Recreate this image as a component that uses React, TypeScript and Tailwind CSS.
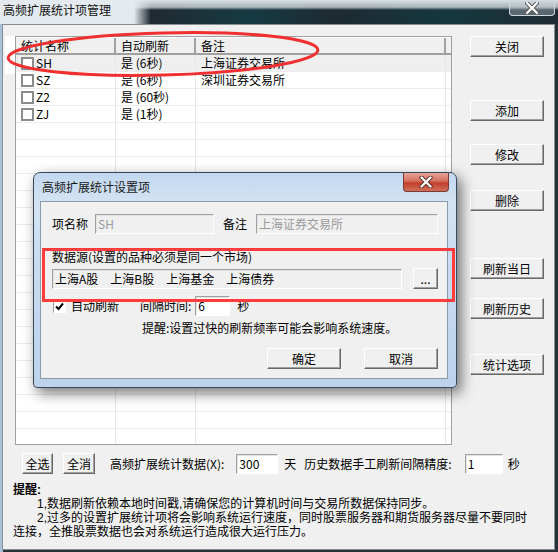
import React from "react";

const rows = [
  { name: "SH", auto: "是 (6秒)", note: "上海证券交易所", sel: true },
  { name: "SZ", auto: "是 (6秒)", note: "深圳证券交易所" },
  { name: "Z2", auto: "是 (60秒)", note: "" },
  { name: "ZJ", auto: "是 (1秒)", note: "" },
];

function Btn({ label, className = "" }: { label: string; className?: string }) {
  return (
    <div
      className={`flex items-center justify-center h-[21px] bg-[#f0f0f0] border border-t-white border-l-white border-b-[#696969] border-r-[#696969] shadow-[inset_-1px_-1px_0_#a0a0a0] text-[12px] ${className}`}
    >
      {label}
    </div>
  );
}

function Field({ value, className = "", disabled = false, gray = false }: { value: string; className?: string; disabled?: boolean; gray?: boolean }) {
  return (
    <div
      className={`flex items-center h-[20px] px-[2px] border border-t-[#a0a0a0] border-l-[#a0a0a0] border-b-white border-r-white shadow-[inset_1px_1px_0_#e3e3e3] ${
        gray ? "bg-[#f0f0f0]" : "bg-white"
      } ${disabled ? "text-[#9a9a9a]" : "text-black"} ${className}`}
    >
      {value}
    </div>
  );
}

function Box() {
  return <div className="w-[13px] h-[13px] border-2 border-[#8c8c8c] bg-white shrink-0" />;
}

export default function App() {
  const filler = Array.from({ length: 19 });
  return (
    <div className="relative w-[558px] h-[552px] overflow-hidden bg-[linear-gradient(to_right,#a8c2dc_0,#a8c2dc_3px,#26323a_3px,#26323a_100%)] font-['Noto_Sans_CJK_SC',sans-serif] text-[12px] leading-[14px] text-black">
      {/* title bar */}
      <div className="h-[24px] flex items-start justify-between bg-[linear-gradient(to_bottom,rgba(228,234,238,0.95)_0,rgba(228,234,238,0.7)_30%,rgba(228,234,238,0)_42%),linear-gradient(to_right,#e3eaef_0,#e3eaef_24%,#1f2a30_27%,#163a44_45%,#1d2a31_60%,#15373f_80%,#1f2c33_100%)]">
        <div className="pl-[3px] pt-[3px] text-[12px] leading-[14px] text-[#111]">高频扩展统计项管理</div>
        <div className="mr-[3px] w-[46px] h-[16px] rounded-b-[4px] border border-t-0 border-[#d0d8de] bg-[rgba(200,210,218,0.35)] flex items-center justify-center">
          <svg width="14" height="12" viewBox="0 0 14 12">
            <path d="M2 1 L12 11 M12 1 L2 11" stroke="#555" strokeWidth="4" strokeLinecap="round" />
            <path d="M2 1 L12 11 M12 1 L2 11" stroke="#fff" strokeWidth="2.2" strokeLinecap="round" />
          </svg>
        </div>
      </div>

      {/* window body */}
      <div className="ml-[2px] w-[553px] h-[526px] border border-[#8a8f94] bg-[#f0f0f0]">
        <div className="flex pl-[12px] pt-[11px]">
          {/* list */}
          <div className="w-[437px] h-[409px] border border-[#a0a0a0] bg-white overflow-hidden">
            <div className="flex h-[18px] bg-[#f0f0f0] border-b-2 border-b-[#a0a0a0] border-t border-t-white">
              <div className="w-[100px] pl-[5px] border-r-2 border-r-[#a0a0a0] flex items-center">统计名称</div>
              <div className="w-[80px] pl-[5px] border-r-2 border-r-[#a0a0a0] flex items-center">自动刷新</div>
              <div className="w-[250px] pl-[5px] border-r-2 border-r-[#a0a0a0] flex items-center">备注</div>
              <div className="flex-1" />
            </div>
            {rows.map((r) => (
              <div key={r.name} className={`flex h-[17px] border-b border-b-[#ececec] ${r.sel ? "bg-[#efefef]" : ""}`}>
                <div className="w-[100px] pl-[5px] border-r border-r-[#e6e6e6] flex items-center gap-[2px]">
                  <Box />
                  <span>{r.name}</span>
                </div>
                <div className="w-[80px] pl-[5px] border-r border-r-[#e6e6e6] flex items-center">{r.auto}</div>
                <div className="w-[250px] pl-[5px] border-r border-r-[#e6e6e6] flex items-center">{r.note}</div>
                <div className="flex-1" />
              </div>
            ))}
            {filler.map((_, i) => (
              <div key={i} className="flex h-[17px] border-b border-b-[#ececec]">
                <div className="w-[100px] border-r border-r-[#e6e6e6]" />
                <div className="w-[80px] border-r border-r-[#e6e6e6]" />
                <div className="w-[250px] border-r border-r-[#e6e6e6]" />
              </div>
            ))}
          </div>

          {/* right buttons */}
          <div className="ml-[18px] flex flex-col">
            <Btn label="关闭" className="w-[74px]" />
            <Btn label="添加" className="w-[74px] mt-[43px]" />
            <Btn label="修改" className="w-[74px] mt-[23px]" />
            <Btn label="删除" className="w-[74px] mt-[25px]" />
            <Btn label="刷新当日" className="w-[74px] mt-[47px]" />
            <Btn label="刷新历史" className="w-[74px] mt-[19px]" />
            <Btn label="统计选项" className="w-[74px] mt-[35px]" />
          </div>
        </div>

        {/* bottom options row */}
        <div className="flex items-center h-[21px] mt-[8px] pl-[19px]">
          <Btn label="全选" className="w-[31px]" />
          <Btn label="全消" className="w-[32px] ml-[10px]" />
          <span className="ml-[15px]">高频扩展统计数据(X):</span>
          <Field value="300" className="w-[42px] ml-[12px]" />
          <span className="ml-[6px]">天</span>
          <span className="ml-[8px]">历史数据手工刷新间隔精度:</span>
          <Field value="1" className="w-[38px] ml-[13px]" />
          <span className="ml-[5px]">秒</span>
        </div>

        {/* reminder */}
        <div className="mt-[9px] pl-[10px] pr-[10px] font-['Liberation_Sans','Noto_Sans_CJK_SC',sans-serif] leading-[14px]">
          <div className="font-bold">提醒:</div>
          <div className="pl-[24px]">1,数据刷新依赖本地时间戳,请确保您的计算机时间与交易所数据保持同步。</div>
          <div className="pl-[24px] whitespace-nowrap">2,过多的设置扩展统计项将会影响系统运行速度，同时股票服务器和期货服务器尽量不要同时</div>
          <div>连接，全推股票数据也会对系统运行造成很大运行压力。</div>
        </div>
      </div>

      {/* annotation highlight + ellipse */}
      <div className="absolute left-[5px] top-[36px] w-[10px] h-[38px] bg-white" />
      <svg className="absolute left-0 top-0 pointer-events-none" width="558" height="552">
        <ellipse cx="163" cy="54" rx="155" ry="21" fill="none" stroke="#f03030" strokeWidth="3" transform="rotate(-1.5 163 54)" />
      </svg>

      {/* dialog */}
      <div className="absolute left-[33px] top-[172px] w-[424px] h-[216px] rounded-t-[7px] rounded-b-[4px] border border-[#37475a] bg-[linear-gradient(to_bottom,#c2d8ef_0,#d3e3f3_14%,#c9dcf0_40%,#bcd3ec_100%)] shadow-[4px_5px_14px_rgba(0,0,0,0.55)]">
        <div className="flex justify-between h-[28px]">
          <div className="pl-[8px] pt-[7px] text-[#1a1a1a]">高频扩展统计设置项</div>
          <div className="mr-[7px] w-[46px] h-[19px] rounded-b-[4px] border border-t-0 border-[#7a3a33] bg-[linear-gradient(to_bottom,#e7a497_0,#d4705f_45%,#c23f2c_55%,#d1705a_100%)] flex items-center justify-center">
            <svg width="14" height="12" viewBox="0 0 14 12">
              <path d="M2.5 1.5 L11.5 10.5 M11.5 1.5 L2.5 10.5" stroke="#5a2a25" strokeWidth="4.2" strokeLinecap="round" />
              <path d="M2.5 1.5 L11.5 10.5 M11.5 1.5 L2.5 10.5" stroke="#fff" strokeWidth="2.4" strokeLinecap="round" />
            </svg>
          </div>
        </div>
        <div className="ml-[6px] w-[408px] h-[178px] border border-[#8a9aab] bg-[#f0f0f0]">
          <div className="flex items-center h-[20px] mt-[12px] pl-[11px]">
            <span>项名称</span>
            <Field value="SH" disabled gray className="w-[119px] ml-[7px]" />
            <span className="ml-[9px]">备注</span>
            <Field value="上海证券交易所" disabled gray className="w-[182px] ml-[9px]" />
          </div>
          <div className="mt-[16px] pl-[11px]">数据源(设置的品种必须是同一个市场)</div>
          <div className="flex items-center mt-[4px] pl-[11px]">
            <Field value="上海A股　上海B股　上海基金　上海债券" gray className="w-[350px]" />
            <Btn label="..." className="w-[25px] ml-[11px]" />
          </div>
          <div className="flex items-center h-[20px] mt-[7px] pl-[12px]">
            <div className="w-[13px] h-[13px] border border-t-[#a0a0a0] border-l-[#a0a0a0] border-b-white border-r-white bg-white flex items-center justify-center">
              <svg width="9" height="9" viewBox="0 0 9 9">
                <path d="M1 4.5 L3.5 7 L8 1.5" stroke="#000" strokeWidth="2" fill="none" />
              </svg>
            </div>
            <span className="ml-[5px]">自动刷新</span>
            <span className="ml-[21px]">间隔时间:</span>
            <Field value="6" className="w-[35px] ml-[4px]" />
            <span className="ml-[7px]">秒</span>
          </div>
          <div className="mt-[5px] pl-[101px]">提醒:设置过快的刷新频率可能会影响系统速度。</div>
          <div className="flex justify-end mt-[13px] pr-[9px]">
            <Btn label="确定" className="w-[74px]" />
            <Btn label="取消" className="w-[74px] ml-[23px]" />
          </div>
        </div>
        <div className="absolute left-[8px] top-[75px] w-[413px] h-[54px] border-[3px] border-[#ff3b3b]" />
      </div>
    </div>
  );
}
